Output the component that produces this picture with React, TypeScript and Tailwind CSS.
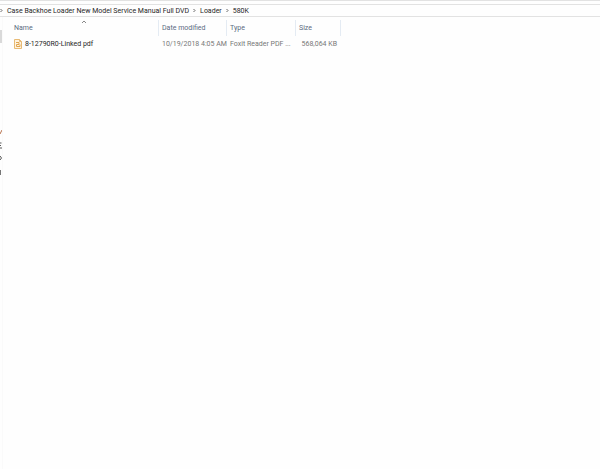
import { Fragment } from 'react'

const crumbs = ['Case Backhoe Loader New Model Service Manual Full DVD', 'Loader', '580K']

const files = [
  {
    name: '8-12790R0-Linked pdf',
    modified: '10/19/2018 4:05 AM',
    type: 'Foxit Reader PDF ...',
    size: '568,064 KB',
  },
]

function Chevron() {
  return (
    <svg viewBox="0 0 3 5" className="h-[5px] w-[3px] shrink-0" fill="none" stroke="#666" aria-hidden="true">
      <path d="M.5 1L2 2.500.5 4" />
    </svg>
  )
}

function PdfIcon() {
  return (
    <svg viewBox="0 0 8 10" className="h-[10px] w-2 shrink-0" fill="none" aria-hidden="true">
      <path d="M.5.5h5l2 2v7h-7z" fill="#fff3df" stroke="#e8bb75" />
      <path d="M5.500.5v2h2" stroke="#e8bb75" />
      <path d="M2 3.500h3v2H2.500v2H6v-2" stroke="#e0a550" />
    </svg>
  )
}

function AddressBar() {
  return (
    <header className="border-t border-[#e2e2e2] pt-[3px]">
      <nav
        aria-label="Address"
        className="flex h-[13px] items-center border-y border-[#e2e2e2] text-[#262626]"
      >
        <Chevron />
        <ol className="flex items-center pl-1">
          {crumbs.map((crumb, i) => (
            <Fragment key={crumb}>
              {i > 0 && (
                <li className="flex px-1">
                  <Chevron />
                </li>
              )}
              <li>
                <button type="button" className="block whitespace-nowrap">
                  {crumb}
                </button>
              </li>
            </Fragment>
          ))}
        </ol>
      </nav>
    </header>
  )
}

function NavPane() {
  return (
    <aside className="w-[3px] shrink-0 overflow-hidden border-r border-[#fafafa]">
      <div className="mt-[13px] h-[13px] w-0.5 bg-[#d9d9d9]" />
      <svg viewBox="0 0 2 50" className="mt-[84px] h-[50px] w-0.5" fill="none" aria-hidden="true">
        <path d="M0 7l2-4" stroke="#b8734f" />
        <path d="M0 16h1.500M0 18.500h1M0 21h2" stroke="#555" />
        <path d="M0 29l1.500 2-1.500 2" stroke="#555" />
        <path d="M.5 43v5" stroke="#777" />
      </svg>
    </aside>
  )
}

function FileTable() {
  return (
    <table className="w-[338px] table-fixed border-separate border-spacing-0 text-left">
      <colgroup>
        <col className="w-[156px]" />
        <col className="w-[68px]" />
        <col className="w-[69px]" />
        <col className="w-[45px]" />
      </colgroup>
      <thead className="text-[#5b6b82]">
        <tr className="h-4">
          <th className="relative border-r border-[#e4ebf3] pl-[11px] font-normal">
            Name
            <svg
              viewBox="0 0 6 4"
              className="absolute top-0 left-1/2 h-1 w-1.5"
              fill="none"
              stroke="#888"
              aria-hidden="true"
            >
              <path d="M1 3l2-2 2 2" />
            </svg>
          </th>
          <th className="border-r border-[#e4ebf3] pl-[3px] font-normal">Date modified</th>
          <th className="border-r border-[#e4ebf3] pl-[3px] font-normal">Type</th>
          <th className="border-r border-[#e4ebf3] pl-[3px] font-normal">Size</th>
        </tr>
      </thead>
      <tbody className="whitespace-nowrap text-[#777]">
        {files.map(file => (
          <tr key={file.name} className="h-4">
            <td className="pl-[11px] text-[#262626]">
              <span className="flex items-center gap-[3px]">
                <PdfIcon />
                {file.name}
              </span>
            </td>
            <td className="pl-[3px]">{file.modified}</td>
            <td className="pl-[3px]">{file.type}</td>
            <td className="pr-1 text-right">{file.size}</td>
          </tr>
        ))}
      </tbody>
    </table>
  )
}

export default function App() {
  return (
    <div className="flex min-h-screen flex-col bg-[#fefefe] font-['Roboto','Open_Sans',sans-serif] text-[7px] leading-[10px]">
      <AddressBar />
      <div className="flex flex-1">
        <NavPane />
        <main className="min-w-0 flex-1 pt-[3px]">
          <FileTable />
        </main>
      </div>
    </div>
  )
}
